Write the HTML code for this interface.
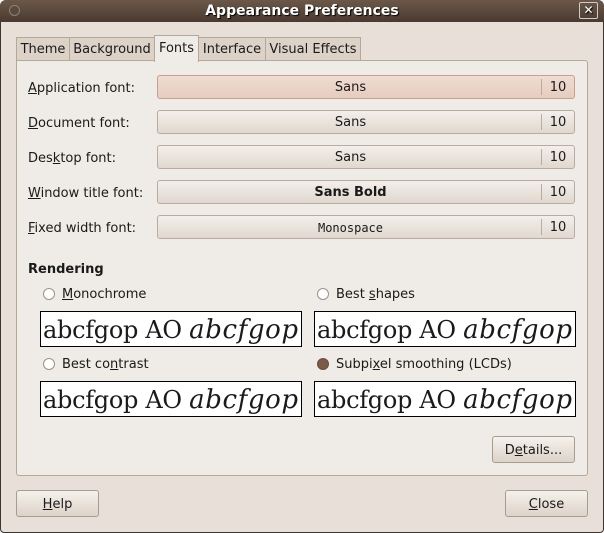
<!DOCTYPE html><html><head><style>
body{margin:0;width:604px;height:533px;overflow:hidden;font-family:"DejaVu Sans","Liberation Sans",sans-serif;font-size:13px;color:#1a1a1a}
#w{position:absolute;left:0;top:0;width:604px;height:533px;background:#e8e0d8;box-shadow:inset 0 0 0 1px #3c3530;border-radius:6px 6px 4px 4px;overflow:hidden}
#t{position:absolute;left:0;top:0;right:0;height:22px;background:linear-gradient(#6b5849,#4a3a2f);color:#fff;font-weight:bold;font-size:14px;text-align:center;line-height:22px;text-shadow:1px 1px 1px #000}
#t .c{position:absolute;left:9px;top:5px;width:9px;height:9px;border-radius:50%;border:1px solid #908075;background:#5a4a3e}
#t .x{position:absolute;right:6px;top:2px;width:17px;height:15px;border:1px solid #ccc;border-radius:2px;line-height:14px;font-size:12px}
.a,.lbl{position:absolute;margin-top:2px}
.tab{position:absolute;top:37px;height:23px;background:#dcd2c8;border:1px solid #b4a898;border-bottom:none;line-height:24px;text-align:center;box-sizing:border-box}
#p{position:absolute;left:16px;top:60px;width:572px;height:416px;background:#efebe6;border:1px solid #b4a898;box-sizing:border-box;border-radius:0 3px 3px 3px}
.lbl{left:28px}
.fb{position:absolute;left:157px;width:418px;height:24px;box-sizing:border-box;border:1px solid #b8aca0;border-radius:3px;background:linear-gradient(#f3efea,#e1d9d0)}
.fb span{position:absolute;left:0;width:385px;text-align:center;top:4px}
.fb i{font-style:normal;position:absolute;right:0;width:32px;border-left:1px solid #b8aca0;top:3px;height:16px;line-height:18px;text-align:center}
.r{position:absolute;width:10px;height:10px;border-radius:50%;border:1px solid #9b918a;background:#fff}
.pv{position:absolute;width:262px;height:36px;border:1px solid #000;background:#fff;box-sizing:border-box;font-family:"DejaVu Serif","Liberation Serif",serif;font-size:24px;line-height:36px;padding-left:2px;white-space:nowrap;overflow:hidden;letter-spacing:-0.3px}
.pv em{font-style:italic;font-size:26px;letter-spacing:0.6px}
.btn{position:absolute;height:27px;box-sizing:border-box;border:1px solid #a89c90;border-radius:3px;background:linear-gradient(#f5f1ec,#ddd3c9);text-align:center;line-height:27px}
u{text-decoration:underline}
</style></head><body><div id="w">
<div id="t"><div class="c"></div>Appearance Preferences<div class="x">✕</div></div>
<div class="tab" style="left:16px;width:54px">Theme</div>
<div class="tab" style="left:69px;width:86px">Background</div>
<div class="tab" style="left:198px;width:68px">Interface</div>
<div class="tab" style="left:265px;width:96px">Visual Effects</div>
<div id="p"></div>
<div class="tab" style="left:154px;width:45px;top:35px;height:27px;background:#efebe6;line-height:25px;z-index:2">Fonts</div>
<div class="lbl" style="top:79px"><u>A</u>pplication font:</div>
<div class="fb" style="top:75px;border-color:#c9a08c;background:linear-gradient(#f0dcd2,#e6ccc0)"><span>Sans</span><i>10</i></div>
<div class="lbl" style="top:114px"><u>D</u>ocument font:</div>
<div class="fb" style="top:110px"><span>Sans</span><i>10</i></div>
<div class="lbl" style="top:149px">Des<u>k</u>top font:</div>
<div class="fb" style="top:145px"><span>Sans</span><i>10</i></div>
<div class="lbl" style="top:184px"><u>W</u>indow title font:</div>
<div class="fb" style="top:180px"><span style="font-weight:bold">Sans Bold</span><i>10</i></div>
<div class="lbl" style="top:219px"><u>F</u>ixed width font:</div>
<div class="fb" style="top:215px"><span style="font-family:'DejaVu Sans Mono','Liberation Mono',monospace;font-size:12px;top:5px">Monospace</span><i>10</i></div>
<div class="a" style="left:28px;top:260px;font-weight:bold">Rendering</div>
<div class="r" style="left:43px;top:288px"></div><div class="a" style="left:62px;top:285px"><u>M</u>onochrome</div>
<div class="r" style="left:317px;top:288px"></div><div class="a" style="left:336px;top:285px">Best <u>s</u>hapes</div>
<div class="pv" style="left:40px;top:311px">abcfgop AO <em>abcfgop</em></div>
<div class="pv" style="left:314px;top:311px">abcfgop AO <em>abcfgop</em></div>
<div class="r" style="left:43px;top:358px"></div><div class="a" style="left:62px;top:355px">Best co<u>n</u>trast</div>
<div class="r" style="left:317px;top:358px;background:#7a5a48;border-color:#6a4c3c"></div><div class="a" style="left:336px;top:355px">Subpi<u>x</u>el smoothing (LCDs)</div>
<div class="pv" style="left:40px;top:381px">abcfgop AO <em>abcfgop</em></div>
<div class="pv" style="left:314px;top:381px">abcfgop AO <em>abcfgop</em></div>
<div class="btn" style="left:492px;top:436px;width:83px">D<u>e</u>tails...</div>
<div class="btn" style="left:16px;top:490px;width:83px"><u>H</u>elp</div>
<div class="btn" style="left:505px;top:490px;width:83px"><u>C</u>lose</div>
</div></body></html>
